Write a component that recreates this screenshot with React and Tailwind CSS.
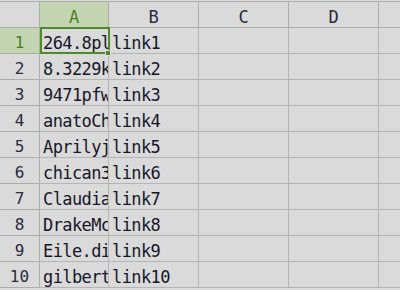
const COL_A = ['264.8pl', '8.3229k', '9471pfw', 'anatoCh', 'Aprilyj', 'chican3', 'Claudia', 'DrakeMc', 'Eile.di', 'gilbert']
const HEADERS = ['A', 'B', 'C', 'D']
const WIDTHS = ['w-[69px]', 'w-[90px]', 'w-[90px]', 'w-[90px]']
const MONO = { fontFamily: '"DejaVu Sans Mono", monospace' }

export default function App() {
  return (
    <div className="relative w-[400px] h-[290px] overflow-hidden bg-[#dadada] pt-px" style={MONO}>
      {/* Column headers */}
      <div className="flex h-[27px] border-t border-[#acacac]">
        <div className="w-[40px] shrink-0 border-r border-b border-[#acacac]" />
        {HEADERS.map((h, i) => (
          <div
            key={h}
            className={`${WIDTHS[i]} shrink-0 border-r border-b border-[#acacac] text-center text-[17px] leading-[31px] ${
              i === 0 ? 'bg-[#c4d6b1] text-[#4a7f24]' : 'text-[#2a2a40]'
            }`}
          >
            {h}
          </div>
        ))}
        <div className="flex-1 border-b border-[#acacac]" />
      </div>

      {/* Rows */}
      {COL_A.map((a, r) => (
        <div key={r} className="flex h-[26px]">
          <div
            className={`w-[40px] shrink-0 border-r border-b border-[#acacac] text-center text-[16px] leading-[30px] overflow-hidden ${
              r === 0 ? 'bg-[#c4d6b1] text-[#4a7f24]' : 'text-[#2a2a40]'
            }`}
          >
            {r + 1}
          </div>
          <div className="w-[69px] shrink-0 border-r border-b border-[#b4b4b4] pl-[3px] text-[17px] tracking-[-0.6px] leading-[30px] text-[#16162a] whitespace-nowrap overflow-hidden">
            {a}
          </div>
          <div className="w-[90px] shrink-0 border-r border-b border-[#b4b4b4] pl-[3px] text-[17px] tracking-[-0.6px] leading-[30px] text-[#16162a] whitespace-nowrap overflow-hidden">
            {`link${r + 1}`}
          </div>
          <div className="w-[90px] shrink-0 border-r border-b border-[#b4b4b4]" />
          <div className="w-[90px] shrink-0 border-r border-b border-[#b4b4b4]" />
          <div className="flex-1 border-b border-[#b4b4b4]" />
        </div>
      ))}

      {/* Active cell A1 */}
      <div className="absolute left-[40px] top-[27px] w-[70px] h-[27px] border-2 border-[#4c8a2b] pointer-events-none" />
      <div className="absolute left-[105px] top-[50px] w-[6px] h-[6px] bg-[#4c8a2b] border border-[#dadada]" />
    </div>
  )
}
